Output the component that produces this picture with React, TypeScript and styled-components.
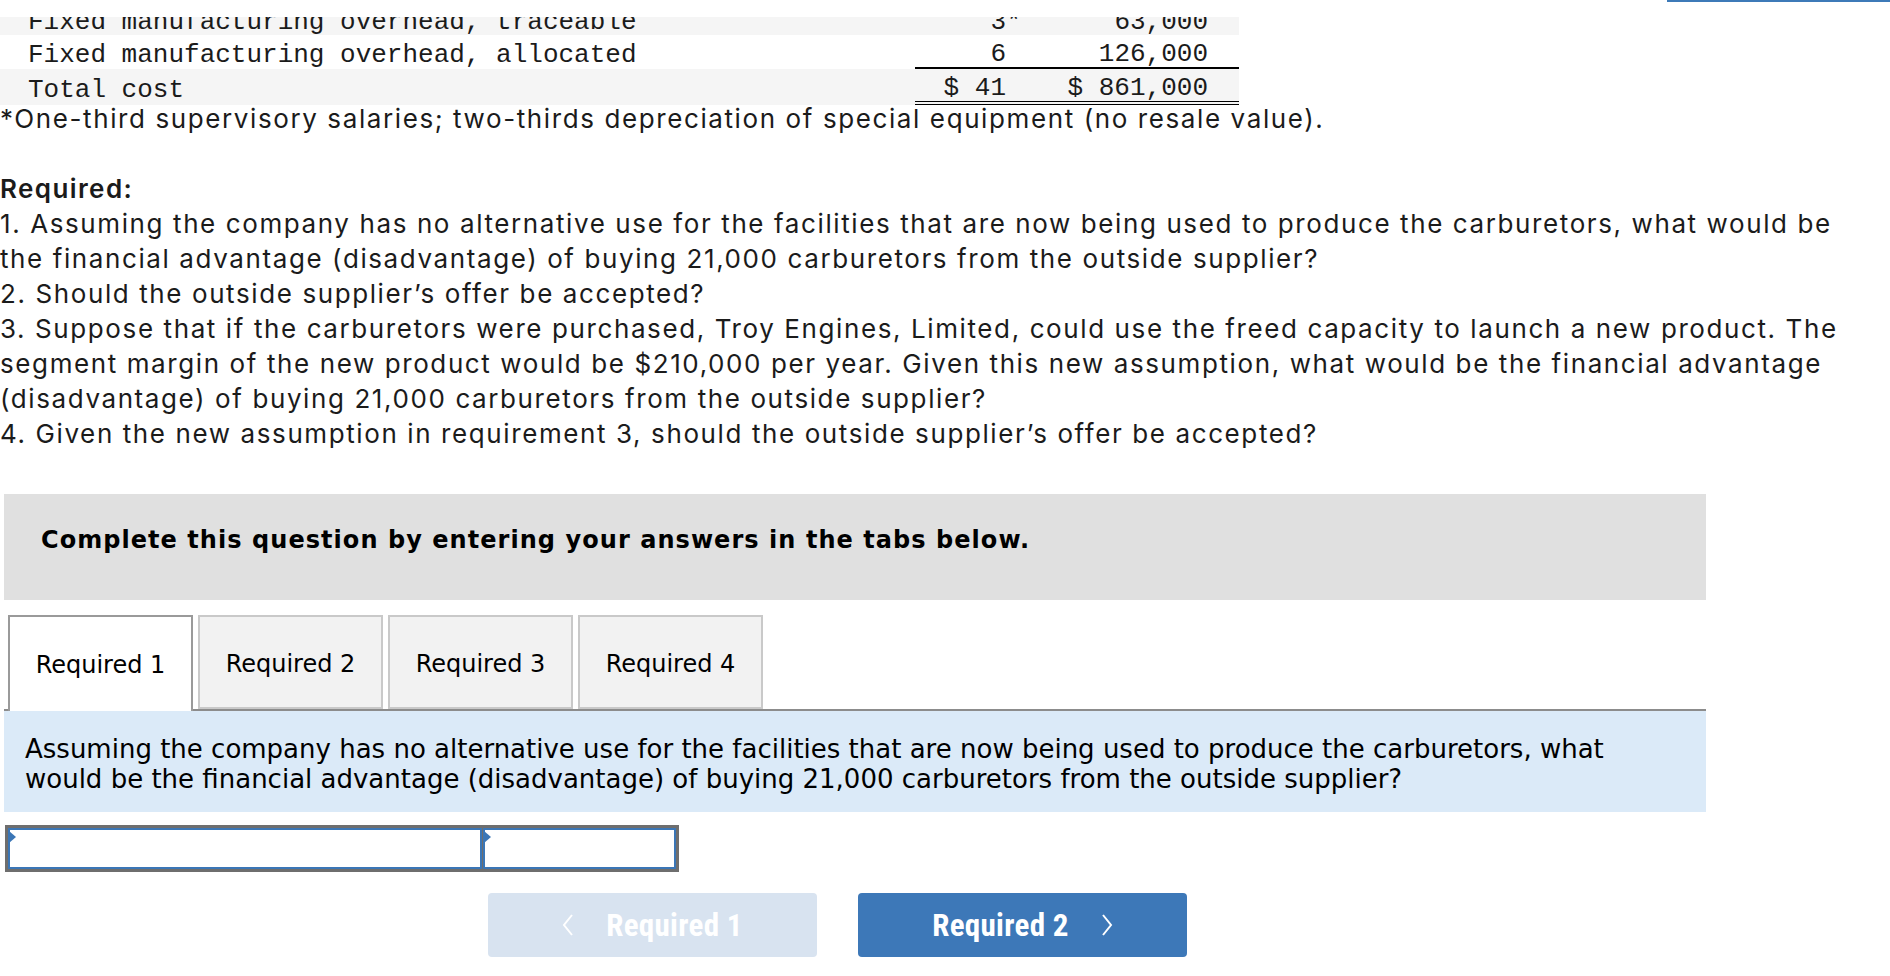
import React from "react";
import styled, { createGlobalStyle } from "styled-components";

const GlobalStyle = createGlobalStyle`
  html, body { margin: 0; padding: 0; background: #ffffff; }
  body { font-family: "Inter", "Open Sans", "Liberation Sans", sans-serif; color: #1b1b1b; }
  * { box-sizing: border-box; }
`;

const Page = styled.div`
  width: 1890px;
  height: 976px;
  overflow: hidden;
  display: flex;
  flex-direction: column;
`;

const TopBar = styled.div`
  height: 17px;
  flex: 0 0 17px;
  background: #ffffff;
  display: flex;
  justify-content: flex-end;
`;

const TopAccent = styled.div`
  width: 223px;
  height: 2px;
  background: #3d7ab8;
`;

const Viewport = styled.div`
  flex: 1;
  overflow: hidden;
`;

const Scrolled = styled.div`
  margin-top: -15px;
`;

const CostTable = styled.table`
  width: 1239px;
  border-collapse: separate;
  border-spacing: 0;
  font-family: "Liberation Mono", "DejaVu Sans Mono", monospace;
  font-size: 26px;
  color: #1b1b1b;
`;

const Row = styled.tr<{ $shaded?: boolean }>`
  height: 33px;
  background: ${(p) => (p.$shaded ? "#f5f5f5" : "#ffffff")};
`;

const LabelCell = styled.td`
  padding: 6px 0 0 28px;
  line-height: 26px;
  white-space: pre;
  vertical-align: middle;
`;

const NumCell = styled.td<{ $w: number; $pr: number; $rule?: "single" | "double" }>`
  width: ${(p) => p.$w}px;
  padding: 6px ${(p) => p.$pr}px 0 0;
  line-height: 26px;
  text-align: right;
  white-space: pre;
  vertical-align: middle;
  border-bottom: ${(p) =>
    p.$rule === "single" ? "2px solid #000" : p.$rule === "double" ? "4px double #000" : "none"};
`;

const Star = styled.span`
  margin-right: -15.6px;
`;

const Prose = styled.div`
  margin-top: -4px;
  font-family: "Inter", "Open Sans", "Liberation Sans", sans-serif;
  font-size: 26px;
  letter-spacing: 1.6px;
  line-height: 35px;
  width: 1862px;
  color: #1b1b1b;
`;

const Para = styled.p`
  margin: 0;
`;

const Blank = styled.div`
  height: 35px;
`;

const Heading = styled.p`
  margin: 0;
  font-weight: 600;
  letter-spacing: 1.4px;
`;

const QuestionPanel = styled.section`
  margin: 43px 0 0 4px;
  width: 1702px;
`;

const Instruction = styled.div`
  height: 106px;
  background: #e0e0e0;
  padding: 31px 37px 0;
  font-family: "DejaVu Sans", "Verdana", sans-serif;
  font-weight: 700;
  font-size: 24px;
  letter-spacing: 1.05px;
  line-height: 30px;
  color: #000;
`;

const TabList = styled.div`
  margin-top: 15px;
  display: flex;
  align-items: flex-end;
  gap: 5px;
  padding-left: 4px;
  height: 96px;
  border-bottom: 2px solid #8c8c8c;
`;

const Tab = styled.div<{ $active?: boolean }>`
  width: 185px;
  height: ${(p) => (p.$active ? "96px" : "94px")};
  margin-bottom: ${(p) => (p.$active ? "-2px" : "0")};
  background: ${(p) => (p.$active ? "#ffffff" : "#f2f2f2")};
  border: 2px solid ${(p) => (p.$active ? "#9a9a9a" : "#c9c9c9")};
  border-bottom: ${(p) => (p.$active ? "none" : "2px solid #c9c9c9")};
  display: flex;
  align-items: center;
  justify-content: center;
  padding-top: 4px;
  padding-bottom: ${(p) => (p.$active ? "2px" : "0")};
  font-family: "DejaVu Sans", "Verdana", sans-serif;
  font-size: 24px;
  color: #000;
`;

const TabPanel = styled.div`
  height: 101px;
  background: #dbeaf8;
  padding: 23px 20px 0 21px;
  font-family: "DejaVu Sans", "Verdana", sans-serif;
  font-size: 26px;
  line-height: 30px;
  color: #000;
`;

const AnswerGrid = styled.div`
  margin: 13px 0 0 1px;
  width: 674px;
  height: 47px;
  border: 3px solid #6e6e6e;
  display: grid;
  grid-template-columns: 474px 1fr;
  gap: 1px;
  background: #6e6e6e;
`;

const AnswerCell = styled.div`
  position: relative;
  background: #fff;
  border: 2px solid #3b76b6;
`;

const CellInput = styled.input`
  width: 100%;
  height: 100%;
  border: none;
  outline: none;
  background: transparent;
  font-family: "Liberation Sans", sans-serif;
  font-size: 20px;
  padding: 0 8px;
`;

const Marker = styled.span`
  position: absolute;
  left: -1px;
  top: 1px;
  width: 0;
  height: 0;
  border-top: 6px solid transparent;
  border-bottom: 6px solid transparent;
  border-left: 7px solid #3b76b6;
`;

const NavRow = styled.div`
  margin-top: 21px;
  padding-left: 484px;
  display: flex;
  gap: 41px;
`;

const NavButton = styled.button<{ $primary?: boolean }>`
  width: 329px;
  height: 64px;
  border: none;
  border-radius: 4px;
  background: ${(p) => (p.$primary ? "#3d78b8" : "#d8e3f0")};
  color: #ffffff;
  display: flex;
  align-items: center;
  justify-content: center;
  gap: 32px;
  font-family: "Liberation Sans Narrow", "Roboto Condensed", "Liberation Sans", sans-serif;
  font-weight: 700;
  font-size: 31px;
  letter-spacing: 0.3px;
  padding: 0;
  cursor: pointer;
`;

const Chevron = ({ dir }: { dir: "left" | "right" }) => (
  <svg width="12" height="24" viewBox="0 0 12 24" fill="none">
    <polyline
      points={dir === "left" ? "10,2 2,12 10,22" : "2,2 10,12 2,22"}
      stroke="#ffffff"
      strokeWidth="2"
      strokeLinejoin="miter"
    />
  </svg>
);

const rows = [
  { label: "Fixed manufacturing overhead, traceable", unit: "3", star: true, amount: "63,000", shaded: true },
  { label: "Fixed manufacturing overhead, allocated", unit: "6", amount: "126,000", rule: "single" as const },
  { label: "Total cost", unit: "$ 41", amount: "$ 861,000", shaded: true, rule: "double" as const },
];

const tabs = ["Required 1", "Required 2", "Required 3", "Required 4"];

export default function App() {
  return (
    <>
      <GlobalStyle />
      <Page>
        <TopBar>
          <TopAccent />
        </TopBar>
        <Viewport>
          <Scrolled>
            <CostTable>
              <tbody>
                {rows.map((r) => (
                  <Row key={r.label} $shaded={r.shaded}>
                    <LabelCell>{r.label}</LabelCell>
                    <NumCell $w={115} $pr={24} $rule={r.rule}>
                      {r.unit}
                      {r.star && <Star>*</Star>}
                    </NumCell>
                    <NumCell $w={209} $pr={31} $rule={r.rule}>
                      {r.amount}
                    </NumCell>
                  </Row>
                ))}
              </tbody>
            </CostTable>
            <Prose>
              <Para>*One-third supervisory salaries; two-thirds depreciation of special equipment (no resale value).</Para>
              <Blank />
              <Heading>Required:</Heading>
              <Para>
                1. Assuming the company has no alternative use for the facilities that are now being used to produce the
                carburetors, what would be the financial advantage (disadvantage) of buying 21,000 carburetors from the
                outside supplier?
              </Para>
              <Para>2. Should the outside supplier’s offer be accepted?</Para>
              <Para>
                3. Suppose that if the carburetors were purchased, Troy Engines, Limited, could use the freed capacity to
                launch a new product. The segment margin of the new product would be $210,000 per year. Given this new
                assumption, what would be the financial advantage (disadvantage) of buying 21,000 carburetors from the
                outside supplier?
              </Para>
              <Para>4. Given the new assumption in requirement 3, should the outside supplier’s offer be accepted?</Para>
            </Prose>
            <QuestionPanel>
              <Instruction>Complete this question by entering your answers in the tabs below.</Instruction>
              <TabList>
                {tabs.map((t, i) => (
                  <Tab key={t} $active={i === 0}>
                    {t}
                  </Tab>
                ))}
              </TabList>
              <TabPanel>
                Assuming the company has no alternative use for the facilities that are now being used to produce the
                carburetors, what would be the financial advantage (disadvantage) of buying 21,000 carburetors from the
                outside supplier?
              </TabPanel>
              <AnswerGrid>
                <AnswerCell>
                  <Marker />
                  <CellInput aria-label="Label" />
                </AnswerCell>
                <AnswerCell>
                  <Marker />
                  <CellInput aria-label="Amount" />
                </AnswerCell>
              </AnswerGrid>
              <NavRow>
                <NavButton>
                  <Chevron dir="left" />
                  <span>Required 1</span>
                </NavButton>
                <NavButton $primary>
                  <span>Required 2</span>
                  <Chevron dir="right" />
                </NavButton>
              </NavRow>
            </QuestionPanel>
          </Scrolled>
        </Viewport>
      </Page>
    </>
  );
}
